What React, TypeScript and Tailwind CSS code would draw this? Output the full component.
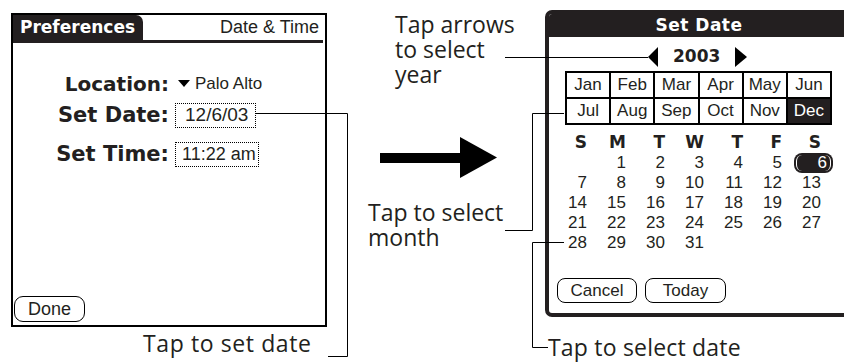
import React from 'react';

const months = ['Jan', 'Feb', 'Mar', 'Apr', 'May', 'Jun', 'Jul', 'Aug', 'Sep', 'Oct', 'Nov', 'Dec'];
const weekDays = ['S', 'M', 'T', 'W', 'T', 'F', 'S'];
// December 2003 starts on a Monday
const days: (number | null)[] = [null, ...Array.from({length: 31}, (_, i) => i + 1)];

function PalmButton({label, width}: {label: string; width: string}) {
    return (
        <div className={`flex h-[25px] ${width} items-center justify-center rounded-[8px] border-[1.5px] border-black font-['Liberation_Sans',sans-serif] text-[17px]`}>
            {label}
        </div>
    );
}

function PreferencesScreen() {
    return (
        <div className="ml-[11px] mt-[13px] flex h-[314px] w-[316px] shrink-0 flex-col border-2 border-black">
            <div className="mr-[2px] flex h-[28px] items-center border-b-[3px] border-[#231f20]">
                <div className="flex h-full w-[130px] items-center rounded-tr-[7px] bg-[#231f20] pl-[7px] font-['DejaVu_Sans',sans-serif] text-[17px] font-bold text-white">
                    Preferences
                </div>
                <span className="ml-auto pr-[4px] font-['Liberation_Sans',sans-serif] text-[18px]">Date &amp; Time</span>
            </div>

            <div className="mt-[28px] flex h-[25px] items-center">
                <span className="w-[156px] text-right font-['DejaVu_Sans',sans-serif] text-[20px] font-bold">Location:</span>
                <svg className="ml-[9px]" width="12" height="7" viewBox="0 0 12 7">
                    <polygon points="0,0 12,0 6,7" fill="#000"/>
                </svg>
                <span className="ml-[5px] font-['Liberation_Sans',sans-serif] text-[17px]">Palo Alto</span>
            </div>

            <div className="mt-[7px] flex h-[25px] items-center">
                <span className="w-[156px] text-right font-['DejaVu_Sans',sans-serif] text-[21px] font-bold">Set Date:</span>
                <span className="ml-[6px] flex h-full w-[81px] items-center whitespace-nowrap border border-dotted border-black pl-[9px] font-['Liberation_Sans',sans-serif] text-[19px]">
                    12/6/03
                </span>
            </div>

            <div className="mt-[14px] flex h-[25px] items-center">
                <span className="w-[156px] text-right font-['DejaVu_Sans',sans-serif] text-[21px] font-bold">Set Time:</span>
                <span className="ml-[6px] flex h-full w-[84px] shrink-0 items-center whitespace-nowrap border border-dotted border-black pl-[6px] font-['Liberation_Sans',sans-serif] text-[18px]">
                    11:22 am
                </span>
            </div>

            <div className="mb-[3px] ml-[1px] mt-auto">
                <div className="flex h-[26px] w-[71px] items-center justify-center rounded-[9px] border-[1.5px] border-black font-['Liberation_Sans',sans-serif] text-[18px]">
                    Done
                </div>
            </div>
        </div>
    );
}

function SetDateScreen() {
    return (
        <div className="ml-[48px] mt-[10px] flex h-[307px] w-[308px] shrink-0 flex-col overflow-hidden rounded-[7px] border-4 border-[#231f20]">
            <div className="flex h-[23px] shrink-0 items-center justify-center bg-[#231f20] font-['DejaVu_Sans',sans-serif] text-[17px] font-bold tracking-[0.5px] text-white">
                Set Date
            </div>

            <div className="mt-[10px] flex h-[20px] items-center pl-[99px]">
                <svg width="10" height="20" viewBox="0 0 10 20">
                    <polygon points="10,0 10,20 0,10" fill="#000"/>
                </svg>
                <span className="ml-[15px] font-['DejaVu_Sans',sans-serif] text-[17px] font-bold">2003</span>
                <svg className="ml-[15px]" width="12" height="20" viewBox="0 0 12 20">
                    <polygon points="0,0 12,10 0,20" fill="#000"/>
                </svg>
            </div>

            <div className="ml-[16px] mt-[4px] grid w-[267px] grid-cols-6 gap-[2px] bg-black p-[2px]">
                {months.map((m) => (
                    <div
                        key={m}
                        className={`flex h-[24px] items-center justify-center font-['Liberation_Sans',sans-serif] text-[17px] ${m === 'Dec' ? 'bg-[#231f20] text-white' : 'bg-white'}`}
                    >
                        {m}
                    </div>
                ))}
            </div>

            <div className="mt-[8px] grid auto-rows-[20px] grid-cols-[repeat(7,39px)] items-center text-right">
                {weekDays.map((d, i) => (
                    <span key={`h${i}`} className="pr-[1px] font-['DejaVu_Sans',sans-serif] text-[17px] font-bold">{d}</span>
                ))}
                {days.map((d, i) =>
                    d === 6 ? (
                        <div key={i} className="flex justify-end">
                            <span className="-mr-[11px] flex h-[20px] w-[39px] rounded-[8px] bg-[#231f20] p-[2px]">
                                <span className="flex w-full items-center justify-end rounded-[6px] border-x-[1.5px] border-white pr-[3px] font-['Liberation_Sans',sans-serif] text-[17px] text-white">
                                    6
                                </span>
                            </span>
                        </div>
                    ) : (
                        <span key={i} className="pr-[1px] font-['Liberation_Sans',sans-serif] text-[17px] leading-[20px]">{d ?? ''}</span>
                    )
                )}
            </div>

            <div className="mb-[10px] ml-[8px] mt-auto flex gap-[8px]">
                <PalmButton label="Cancel" width="w-[80px]"/>
                <PalmButton label="Today" width="w-[81px]"/>
            </div>
        </div>
    );
}

export default function App() {
    return (
        <div className="relative h-[362px] w-[844px] overflow-hidden bg-white text-[#231f20]">
            <div className="flex items-start">
                <PreferencesScreen/>
                <svg className="ml-[53px] mt-[137px] shrink-0" width="117" height="41" viewBox="0 0 117 41">
                    <rect x="0" y="16" width="81" height="10" fill="#000"/>
                    <polygon points="80,0 117,20.5 80,41" fill="#000"/>
                </svg>
                <SetDateScreen/>
            </div>

            <p className="absolute left-[395px] top-[12px] font-['Open_Sans',sans-serif] text-[23px] leading-[25px]">
                Tap arrows<br/>to select<br/>year
            </p>
            <p className="absolute left-[368px] top-[200px] font-['Open_Sans',sans-serif] text-[23px] leading-[25px]">
                Tap to select<br/>month
            </p>
            <p className="absolute left-[143px] top-[331px] font-['Open_Sans',sans-serif] text-[23px] leading-[25px] tracking-[0.6px]">
                Tap to set date
            </p>
            <p className="absolute left-[548px] top-[335px] font-['Open_Sans',sans-serif] text-[23px] leading-[25px] tracking-[0.2px]">
                Tap to select date
            </p>

            <svg className="pointer-events-none absolute left-0 top-0" width="844" height="362" viewBox="0 0 844 362" fill="none" stroke="#000" strokeWidth="1">
                <polyline points="505,57.5 648,57.5"/>
                <polyline points="505,230.5 532.5,230.5 532.5,113.5 564,113.5"/>
                <polyline points="564,242.5 532.5,242.5 532.5,347.5 548,347.5"/>
                <polyline points="256,113.5 347.5,113.5 347.5,356.5 328,356.5"/>
            </svg>
        </div>
    );
}
